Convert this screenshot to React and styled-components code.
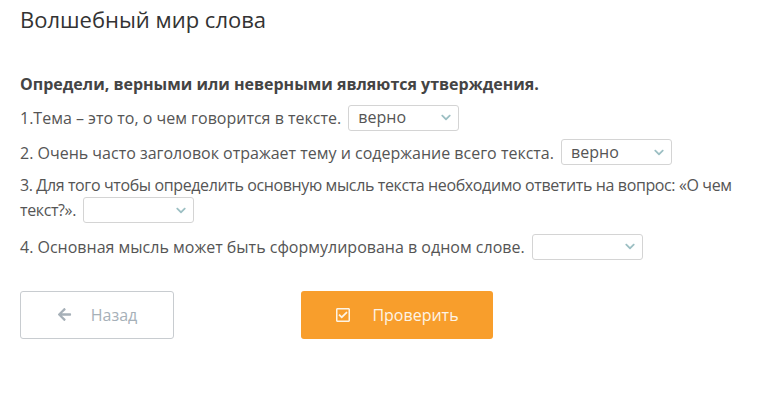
import React from 'react'
import styled, { createGlobalStyle } from 'styled-components'
import { FaArrowLeft, FaRegCheckSquare, FaChevronDown } from 'react-icons/fa'

const GlobalStyle = createGlobalStyle`
  html, body {
    margin: 0;
    padding: 0;
    background: #ffffff;
  }
  body {
    font-family: "Open Sans", "Liberation Sans", sans-serif;
    color: #555555;
  }
`

const statements = [
  { text: '1.Тема – это то, о чем говорится в тексте.', value: 'верно' },
  { text: '2. Очень часто заголовок отражает тему и содержание всего текста.', value: 'верно' },
  { text: '3. Для того чтобы определить основную мысль текста необходимо ответить на вопрос: «О чем текст?».', value: '', tight: true },
  { text: '4. Основная мысль может быть сформулирована в одном слове.', value: '' },
]

function Select({ value }) {
  return (
    <SelectBox>
      <span>{value}</span>
      <Chevron />
    </SelectBox>
  )
}

export default function App() {
  return (
    <Page>
      <GlobalStyle />
      <Title>Волшебный мир слова</Title>
      <Task>Определи, верными или неверными являются утверждения.</Task>
      <List>
        {statements.map((s, i) => (
          <Statement key={i} $tight={s.tight}>
            {s.text} <Select value={s.value} />
          </Statement>
        ))}
      </List>
      <Buttons>
        <BackButton>
          <FaArrowLeft size={15} />
          Назад
        </BackButton>
        <CheckButton>
          <FaRegCheckSquare size={16} />
          Проверить
        </CheckButton>
      </Buttons>
    </Page>
  )
}

const Page = styled.div`
  width: 781px;
  height: 418px;
  box-sizing: border-box;
  padding: 4px 20px 0;
  overflow: hidden;
`

const Title = styled.h1`
  margin: 0;
  font-size: 22px;
  font-weight: 400;
  line-height: 30px;
  color: #333333;
`

const Task = styled.p`
  margin: 37px 0 0;
  font-size: 16px;
  font-weight: 700;
  line-height: 26px;
  color: #444444;
`

const List = styled.div`
  display: flex;
  flex-direction: column;
  gap: 8px;
  margin-top: 9px;
`

const Statement = styled.p`
  margin: 0;
  font-size: 16px;
  line-height: 25px;
  color: #555555;
  letter-spacing: ${p => (p.$tight ? '-0.38px' : 'normal')};
  ${p => p.$tight && 'margin-top: -2px; margin-bottom: 2px;'}
`

const SelectBox = styled.span`
  display: inline-flex;
  align-items: center;
  justify-content: space-between;
  vertical-align: middle;
  box-sizing: border-box;
  width: 111px;
  height: 26px;
  margin-left: 3px;
  padding: 0 6px 0 9px;
  border: 1px solid #d4d4d4;
  border-radius: 3px;
  background: #ffffff;
  font-size: 16px;
  letter-spacing: normal;
  color: #555555;
  position: relative;
  top: -2px;
`

const Chevron = styled(FaChevronDown)`
  color: #9cbfc3;
  width: 12px;
  height: 11px;
`

const Buttons = styled.div`
  display: flex;
  gap: 127px;
  margin-top: 29px;
`

const ButtonBase = styled.div`
  display: flex;
  align-items: center;
  justify-content: center;
  gap: 19px;
  box-sizing: border-box;
  height: 48px;
  border-radius: 3px;
  font-size: 16px;
`

const BackButton = styled(ButtonBase)`
  width: 154px;
  border: 1px solid #c8ccd0;
  color: #a6b0b8;
  background: #ffffff;
`

const CheckButton = styled(ButtonBase)`
  width: 192px;
  background: #f89e2c;
  color: #fdf4e6;
  gap: 21px;
`
